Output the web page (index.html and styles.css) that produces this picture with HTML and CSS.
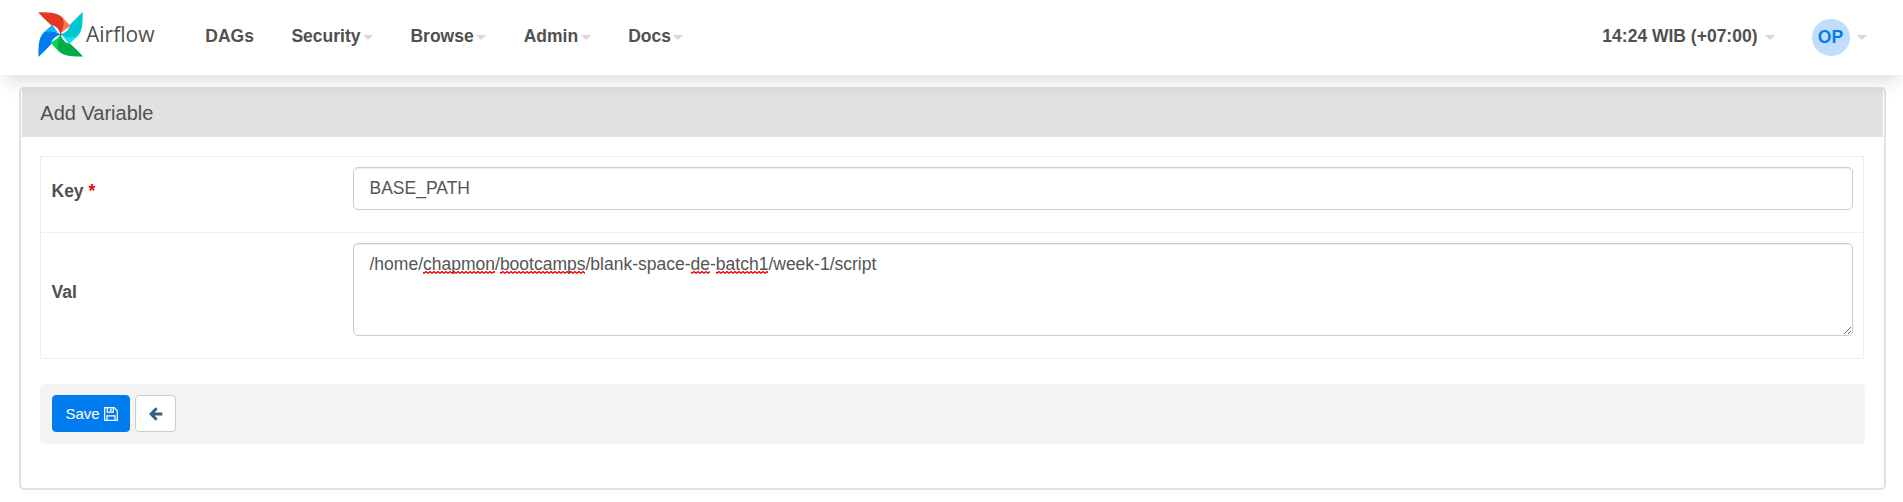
FILE: index.html
```html
<!DOCTYPE html>
<html lang="en">
<head>
<meta charset="utf-8">
<title>Add Variable - Airflow</title>
<link rel="stylesheet" href="styles.css">
</head>
<body>
<nav class="navbar">
  <a class="brand">
    <svg width="130" height="60" viewBox="30 4 130 60" aria-label="Airflow">
      <g>
        <path fill="#e43921" d="M38.1 12.2C47 12.500 57 11.500 63.200 18.200C65.500 25 63 30 60.6 34.4C59 29.500 56 25.500 51.300 25.300C47 21.500 42 16.500 38.100 12.200Z"/>
        <path fill="#ff7557" d="M62.500 17.400L70.300 25.800C66 29.500 62.500 31 60.600 34.400C63.500 29 64.800 24 62.500 17.400Z"/>
      </g>
      <g transform="rotate(90 60.6 34.4)">
        <path fill="#00c7d4" d="M38.1 12.2C47 12.500 57 11.500 63.200 18.200C65.500 25 63 30 60.6 34.4C59 29.500 56 25.500 51.300 25.300C47 21.500 42 16.500 38.100 12.200Z"/>
        <path fill="#11e1ee" d="M62.500 17.400L70.300 25.800C66 29.500 62.500 31 60.600 34.400C63.500 29 64.800 24 62.500 17.400Z"/>
      </g>
      <g transform="rotate(180 60.6 34.4)">
        <path fill="#00ad46" d="M38.1 12.2C47 12.500 57 11.500 63.200 18.200C65.500 25 63 30 60.6 34.4C59 29.500 56 25.500 51.300 25.300C47 21.500 42 16.500 38.100 12.200Z"/>
        <path fill="#04d659" d="M62.500 17.400L70.300 25.800C66 29.500 62.500 31 60.600 34.400C63.500 29 64.800 24 62.500 17.400Z"/>
      </g>
      <g transform="rotate(270 60.6 34.4)">
        <path fill="#017cee" d="M38.1 12.2C47 12.500 57 11.500 63.200 18.200C65.500 25 63 30 60.6 34.4C59 29.500 56 25.500 51.300 25.300C47 21.500 42 16.500 38.100 12.200Z"/>
        <path fill="#0cb6ff" d="M62.500 17.400L70.300 25.800C66 29.500 62.500 31 60.600 34.400C63.500 29 64.800 24 62.500 17.400Z"/>
      </g>
      <circle cx="60.600" cy="34.400" r="1" fill="#51504f"/>
      <text class="wordmark" x="86" y="42" textLength="68.500" lengthAdjust="spacingAndGlyphs">Airflow</text>
    </svg>
  </a>
  <ul class="menu">
    <li>DAGs</li>
    <li>Security<b class="caret"></b></li>
    <li>Browse<b class="caret"></b></li>
    <li>Admin<b class="caret"></b></li>
    <li>Docs<b class="caret"></b></li>
  </ul>
  <div class="account">
    <span class="clock">14:24 WIB (+07:00)<b class="caret"></b></span>
    <span class="user"><span class="avatar">OP</span><b class="caret"></b></span>
  </div>
</nav>
<main class="panel">
  <h1 class="panel-title">Add Variable</h1>
  <div class="panel-body">
    <div class="fields">
      <div class="row">
        <label class="label" for="key">Key <span class="required">*</span></label>
        <input class="control" id="key" type="text" value="BASE_PATH">
      </div>
      <div class="row row-val">
        <span class="label">Val</span>
        <div class="control area">/home/<span class="misspelt">chapmon</span>/<span class="misspelt">bootcamps</span>/blank-space-<span class="misspelt">de</span>-<span class="misspelt">batch1</span>/week-1/script</div>
      </div>
    </div>
    <div class="actions">
      <button class="btn save">Save
        <svg width="14" height="14" viewBox="0 0 14 14" fill="none" stroke="#fff" stroke-width="1.2"><path d="M.7.700H10.200L13.300 3.800V13.300H.7ZM3 13.300V8.900H11V13.300M3.300.700V5.200H9.300V.7"/><path d="M6.900 1.500V4.200" stroke-width="1.500"/></svg>
      </button>
      <button class="btn back" aria-label="Back">
        <svg width="14" height="14" viewBox="0 0 14 14"><path fill="none" stroke="#35607f" stroke-width="2.900" d="M7.700 1.300L2 7L7.700 12.700M2.200 7H13.300"/></svg>
      </button>
    </div>
  </div>
</main>
</body>
</html>
```

FILE: styles.css
```css
* { box-sizing: border-box; }
body {
  margin: 0;
  background: #fff;
  color: #51504f;
  font: 17.5px/25px "Liberation Sans", Arial, sans-serif;
}
.navbar {
  position: relative;
  display: flex;
  height: 75px;
  padding: 4px 30px 0;
  background: #fff;
  box-shadow: 0 8px 20px -4px rgba(0, 0, 0, .16);
  font-weight: bold;
}
.brand { display: block; width: 130px; height: 60px; }
.wordmark { font: 400 21px "Open Sans", sans-serif; fill: #51504f; }
.menu {
  display: flex;
  gap: 37.5px;
  margin: 0 0 0 45.3px;
  padding: 20px 0 0;
  list-style: none;
}
.caret {
  display: inline-block;
  margin-left: 2.5px;
  border: 5px solid transparent;
  border-top-color: #e2d2e2;
  border-bottom: 0;
  vertical-align: middle;
}
.account { display: flex; margin-left: auto; padding-right: 6px; }
.clock { padding-top: 20px; margin-right: 36.5px; }
.account .caret { margin-left: 7.5px; }
.user { display: flex; align-items: center; height: 37px; margin-top: 15px; }
.avatar {
  width: 38px;
  height: 37px;
  border-radius: 19px;
  background: #c0ddfb;
  color: #017cee;
  line-height: 36px;
  text-align: center;
}
.panel {
  height: 403px;
  margin: 12px 17px 0 19px;
  border: 2px solid #e1e1e1;
  border-radius: 5px;
}
.panel-title {
  height: 50px;
  margin: -2px 1px 0;
  padding: 14px 18px 0 18.3px;
  background: #e1e1e1;
  border-radius: 4px 4px 0 0;
  font-size: 20px;
  font-weight: normal;
}
.panel-body { padding: 19px 19px 0; }
.fields { width: 1824px; border: 1px solid #eee; }
.row {
  display: grid;
  grid-template-columns: 312px 1500px;
  align-items: start;
  height: 75px;
  padding-top: 10px;
}
.row-val { height: 126px; border-top: 1px solid #eee; }
.label { padding: 12px 0 0 10.5px; font-weight: bold; }
.row-val .label { padding-top: 37px; }
.required { color: #f00; }
.control {
  width: 1500px;
  height: 43px;
  padding: 8px 15.5px 9px;
  border: 1px solid #ccc;
  border-radius: 5px;
  background: #fff;
  box-shadow: inset 0 1px 1px rgba(0, 0, 0, .075);
  color: #555;
  font: inherit;
}
.area { height: 93px; overflow: auto; resize: vertical; }
.misspelt {
  background: url("data:image/svg+xml,%3Csvg xmlns='http://www.w3.org/2000/svg' width='4' height='3'%3E%3Cpath d='M-1 .5L1 2.200L3 .5L5 2.200' fill='none' stroke='red' stroke-width='1.300'/%3E%3C/svg%3E") left bottom / 4px 3px repeat-x;
}
.actions {
  display: flex;
  gap: 5px;
  width: 1825px;
  height: 60px;
  margin-top: 25px;
  padding: 11px 12px;
  border-radius: 5px;
  background: #f4f4f4;
}
.btn {
  display: flex;
  align-items: center;
  justify-content: center;
  gap: 4px;
  height: 37px;
  padding: 0;
  border: 1px solid #ccc;
  border-radius: 4px;
  background: #fff;
  font: 15px "Liberation Sans", Arial, sans-serif;
}
.save { width: 78px; padding-left: 1px; border-color: #017cee; background: #017cee; color: #fff; }
.back { width: 41px; }
```
